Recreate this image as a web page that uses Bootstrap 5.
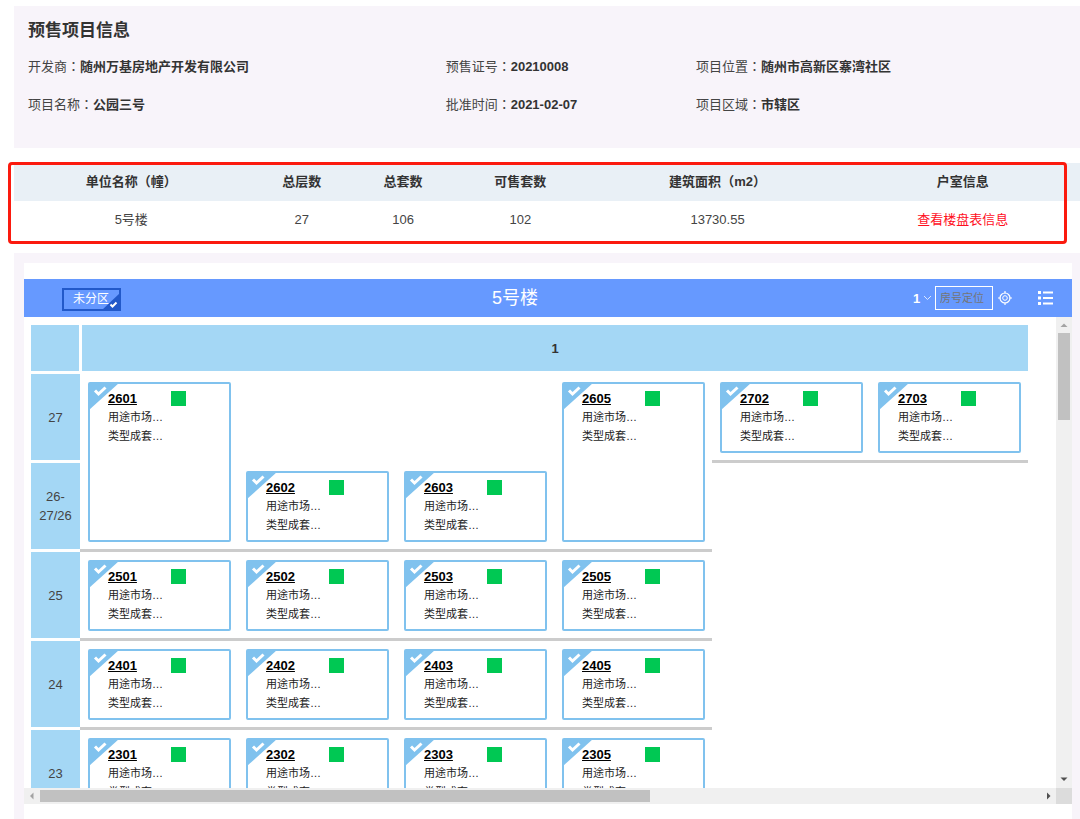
<!DOCTYPE html>
<html lang="zh-CN">
<head>
<meta charset="utf-8">
<meta name="viewport" content="width=device-width, initial-scale=1">
<title>预售项目信息</title>
<link href="https://cdn.jsdelivr.net/npm/bootstrap@5.3.0/dist/css/bootstrap.min.css" rel="stylesheet">
<style>
  :root { --panel: #f8f4fa; --bar: #6699ff; --floor: #a4d7f5; --edge: #80c2ee; }
  body { font-family: "Liberation Sans", "Noto Sans CJK SC", sans-serif; font-size: 13px; line-height: 19px; color: #444; background: #fff; min-height: 600px; }
  .sep { font-family: "Noto Sans CJK TC", sans-serif; line-height: 1; }

  .project { background: var(--panel); margin: 6px 0 0 14px; padding: 14px 0 24px 14px; }
  .project h1 { font-size: 17px; line-height: 22px; font-weight: 700; color: #333; margin: 0 0 6px; }
  .project dl { line-height: 38px; }
  .project dt { font-weight: 400; }
  .project dd { font-weight: 700; color: #333; margin: 0; }
  .w-a { width: 39.7%; } .w-b { width: 23.8%; } .w-c { width: 36.5%; }

  .units { margin: 15px 0 0 14px; }
  .units table { table-layout: fixed; color: #444; }
  .units th, .units td { padding: 9px 0; line-height: 20px; text-align: center; border: 0; }
  .units th { background: #e9f0f6; color: #333; }
  .units td { background: #fff; padding-bottom: 13px; }
  .units a { color: #ff0f1e; }
  .outline { left: -6px; right: 13px; top: -1px; bottom: -1px; border: 3px solid #fb1a0e; border-radius: 4px; pointer-events: none; }

  .frame { background: var(--panel); margin: 10px 0 0 14px; padding: 10px 8px 0 10px; min-height: 0; }
  .sheet { background: #fff; padding: 16px 0 15px; }
  .toolbar { background: var(--bar); height: 38px; color: #fff; }
  .toolbar h2 { font-size: 18px; line-height: 22px; font-weight: 400; margin: 0; }
  .zone { margin: 3px 0 0 38px; width: 59px; height: 23px; font-size: 12px; line-height: 19px; padding: 0 0 0 9px; text-align: left; color: #fff; background: transparent; border: 2px solid #2259c9; }
  .zone svg { right: -1px; bottom: -1px; }
  .tools { padding-right: 18px; }
  .unit-pick { appearance: none; border: 0; width: 26px; padding: 0 0 0 4px; color: #fff; font-weight: 700; font-size: 13px; background: url("data:image/svg+xml,%3Csvg xmlns='http://www.w3.org/2000/svg' width='9' height='6'%3E%3Cpath d='M1 1l3.500 3.500L8 1' fill='none' stroke='%23dbe7ff'/%3E%3C/svg%3E") no-repeat 14px center; }
  .finder { width: 58px; height: 24px; font-size: 11px; padding: 0 4px; border: 1px solid #fff; background: transparent; color: #fff; }
  .finder::placeholder { color: #757575; opacity: 1; }
  .tool { border: 0; padding: 0; background: none; color: #fff; line-height: 0; }

  .viewport { overflow: hidden; padding: 8px 0 0 7px; }
  .building { display: grid; grid-template-columns: 49px repeat(6, 158px); grid-template-rows: 49px; grid-auto-rows: 89px; }
  .level, .corner, .unit-head { background: var(--floor); margin-bottom: 3px; text-align: center; }
  .level { grid-column: 1; padding: 0 4px; }
  .corner { margin-right: 1px; }
  .unit-head { grid-column: 2 / -1; margin-left: 2px; font-weight: 700; color: #333; }
  .cell { padding: 8px 7px 7px 8px; border-bottom: 3px solid #ccc; }
  .room { height: 100%; border: 2px solid var(--edge); border-radius: 2px; padding: 5px 0 0 18px; background: #fff; color: #222; font-size: 11px; }
  .room a { width: 63px; font-size: 13px; font-weight: 700; color: #000; }
  .room .flag { left: -1px; top: -1px; }
  .state { width: 15px; height: 15px; background: #00c853; }

  .vbar { width: 16px; background: #f0f0f0; }
  .vthumb { width: 12px; height: 87px; background: #c1c1c1; }
  .hbar { height: 16px; background: #f0f0f0; }
  .hthumb { width: 61%; height: 12px; background: #c1c1c1; }
  .arrow { width: 16px; height: 16px; }
  .grip { width: 16px; height: 16px; background: #dcdcdc; }
</style>
</head>
<body class="d-flex flex-column vh-100 overflow-hidden">

<svg class="d-none" aria-hidden="true">
  <symbol id="flag" viewBox="0 0 30 27">
    <path d="M0 0H30L0 27Z" fill="#80c2ee"/>
    <path d="M6 7.500L9.500 11L16.500 4.500" fill="none" stroke="#fff" stroke-width="3"/>
  </symbol>
</svg>

<section class="project flex-shrink-0">
  <h1>预售项目信息</h1>
  <div class="d-flex">
    <dl class="d-flex w-a m-0"><dt>开发商<span class="sep" lang="zh-TW">：</span></dt><dd>随州万基房地产开发有限公司</dd></dl>
    <dl class="d-flex w-b m-0"><dt>预售证号<span class="sep" lang="zh-TW">：</span></dt><dd>20210008</dd></dl>
    <dl class="d-flex w-c m-0"><dt>项目位置<span class="sep" lang="zh-TW">：</span></dt><dd>随州市高新区寨湾社区</dd></dl>
  </div>
  <div class="d-flex">
    <dl class="d-flex w-a m-0"><dt>项目名称<span class="sep" lang="zh-TW">：</span></dt><dd>公园三号</dd></dl>
    <dl class="d-flex w-b m-0"><dt>批准时间<span class="sep" lang="zh-TW">：</span></dt><dd>2021-02-07</dd></dl>
    <dl class="d-flex w-c m-0"><dt>项目区域<span class="sep" lang="zh-TW">：</span></dt><dd>市辖区</dd></dl>
  </div>
</section>

<section class="units position-relative flex-shrink-0">
  <table class="table table-borderless mb-0">
    <colgroup><col style="width:22%"><col style="width:10%"><col style="width:9%"><col style="width:13%"><col style="width:24%"><col style="width:22%"></colgroup>
    <thead><tr><th>单位名称<span class="sep" lang="zh-TW">（</span>幢<span class="sep" lang="zh-TW">）</span></th><th>总层数</th><th>总套数</th><th>可售套数</th><th>建筑面积<span class="sep" lang="zh-TW">（</span>m2<span class="sep" lang="zh-TW">）</span></th><th>户室信息</th></tr></thead>
    <tbody><tr><td>5号楼</td><td>27</td><td>106</td><td>102</td><td>13730.55</td><td><a href="#building" class="text-decoration-none">查看楼盘表信息</a></td></tr></tbody>
  </table>
  <div class="outline position-absolute"></div>
</section>

<section class="frame flex-grow-1 d-flex flex-column" id="building">
  <div class="sheet flex-grow-1 d-flex flex-column overflow-hidden">
    <div class="toolbar d-flex align-items-center flex-shrink-0">
      <button type="button" class="zone position-relative">未分区
        <svg class="position-absolute" width="18" height="17" viewBox="0 0 18 17" aria-hidden="true"><path d="M18 0V17H0Z" fill="#2259c9"/><path d="M8.500 11.500L10.500 13.500L14.500 9.500" fill="none" stroke="#fff" stroke-width="2"/></svg>
      </button>
      <h2 class="flex-grow-1 text-center">5号楼</h2>
      <div class="tools d-flex align-items-center">
        <select class="unit-pick" aria-label="单元"><option>1</option></select>
        <input type="text" class="finder" placeholder="房号定位" aria-label="房号定位">
        <button type="button" class="tool ms-1" aria-label="定位">
          <svg width="16" height="16" viewBox="0 0 16 16" fill="none" stroke="currentColor"><circle cx="8" cy="8" r="5" stroke-width="1.200"/><circle cx="8" cy="8" r="2.300"/><path d="M8 1V3.500M8 12.500V15M1 8H3.500M12.500 8H15" stroke-width="1.200"/></svg>
        </button>
        <button type="button" class="tool ms-4" aria-label="列表">
          <svg width="17" height="16" viewBox="0 0 17 16" fill="currentColor"><path d="M1 1h3v3H1zM1 6.500h3v3H1zM1 12h3v3H1zM6 1.500h10v2H6zM6 7h10v2H6zM6 12.500h10v2H6z"/></svg>
        </button>
      </div>
    </div>
    <div class="flex-grow-1 d-flex overflow-hidden">
      <div class="viewport flex-grow-1">
        <div class="building" id="grid">
          <div class="corner"></div>
          <div class="unit-head d-flex align-items-center justify-content-center">1</div>
        </div>
      </div>
      <div class="vbar d-flex flex-column align-items-center flex-shrink-0">
        <svg class="arrow flex-shrink-0" viewBox="0 0 16 16"><path d="M8 6.500L11.500 10H4.500Z" fill="#a3a3a3"/></svg>
        <div class="vthumb"></div>
        <svg class="arrow mt-auto flex-shrink-0" viewBox="0 0 16 16"><path d="M8 9L11.500 5.500H4.500Z" fill="#505050"/></svg>
      </div>
    </div>
    <div class="hbar d-flex align-items-center flex-shrink-0">
      <svg class="arrow" viewBox="0 0 16 16"><path d="M6 8L9.500 4.500V11.500Z" fill="#a3a3a3"/></svg>
      <div class="flex-grow-1"><div class="hthumb"></div></div>
      <svg class="arrow" viewBox="0 0 16 16"><path d="M10.500 8L7 4.500V11.500Z" fill="#505050"/></svg>
      <div class="grip"></div>
    </div>
  </div>
</section>

<script src="https://cdn.jsdelivr.net/npm/bootstrap@5.3.0/dist/js/bootstrap.bundle.min.js"></script>
<script>
  // Each floor lists its rooms as [number, grid column, rows spanned].
  const floors = [
    ['27', [['2601', 2, 2], ['2605', 5, 2], ['2702', 6, 1], ['2703', 7, 1]]],
    ['26-27/26', [['2602', 3, 1], ['2603', 4, 1]]],
    ['25', [['2501', 2, 1], ['2502', 3, 1], ['2503', 4, 1], ['2505', 5, 1]]],
    ['24', [['2401', 2, 1], ['2402', 3, 1], ['2403', 4, 1], ['2405', 5, 1]]],
    ['23', [['2301', 2, 1], ['2302', 3, 1], ['2303', 4, 1], ['2305', 5, 1]]]
  ];
  const grid = document.getElementById('grid');
  floors.forEach(([name, rooms], i) => {
    const row = i + 2;
    grid.insertAdjacentHTML('beforeend',
      `<div class="level d-flex align-items-center justify-content-center" style="grid-row:${row}">${name}</div>` +
      rooms.map(([no, col, span]) => `
        <div class="cell" style="grid-area:${row} / ${col} / span ${span}">
          <div class="room position-relative">
            <svg class="flag position-absolute" width="30" height="27"><use href="#flag"/></svg>
            <div class="d-flex align-items-center position-relative"><a href="#${no}">${no}</a><span class="state"></span></div>
            <div>用途市场…</div>
            <div>类型成套…</div>
          </div>
        </div>`).join(''));
  });
</script>
</body>
</html>
